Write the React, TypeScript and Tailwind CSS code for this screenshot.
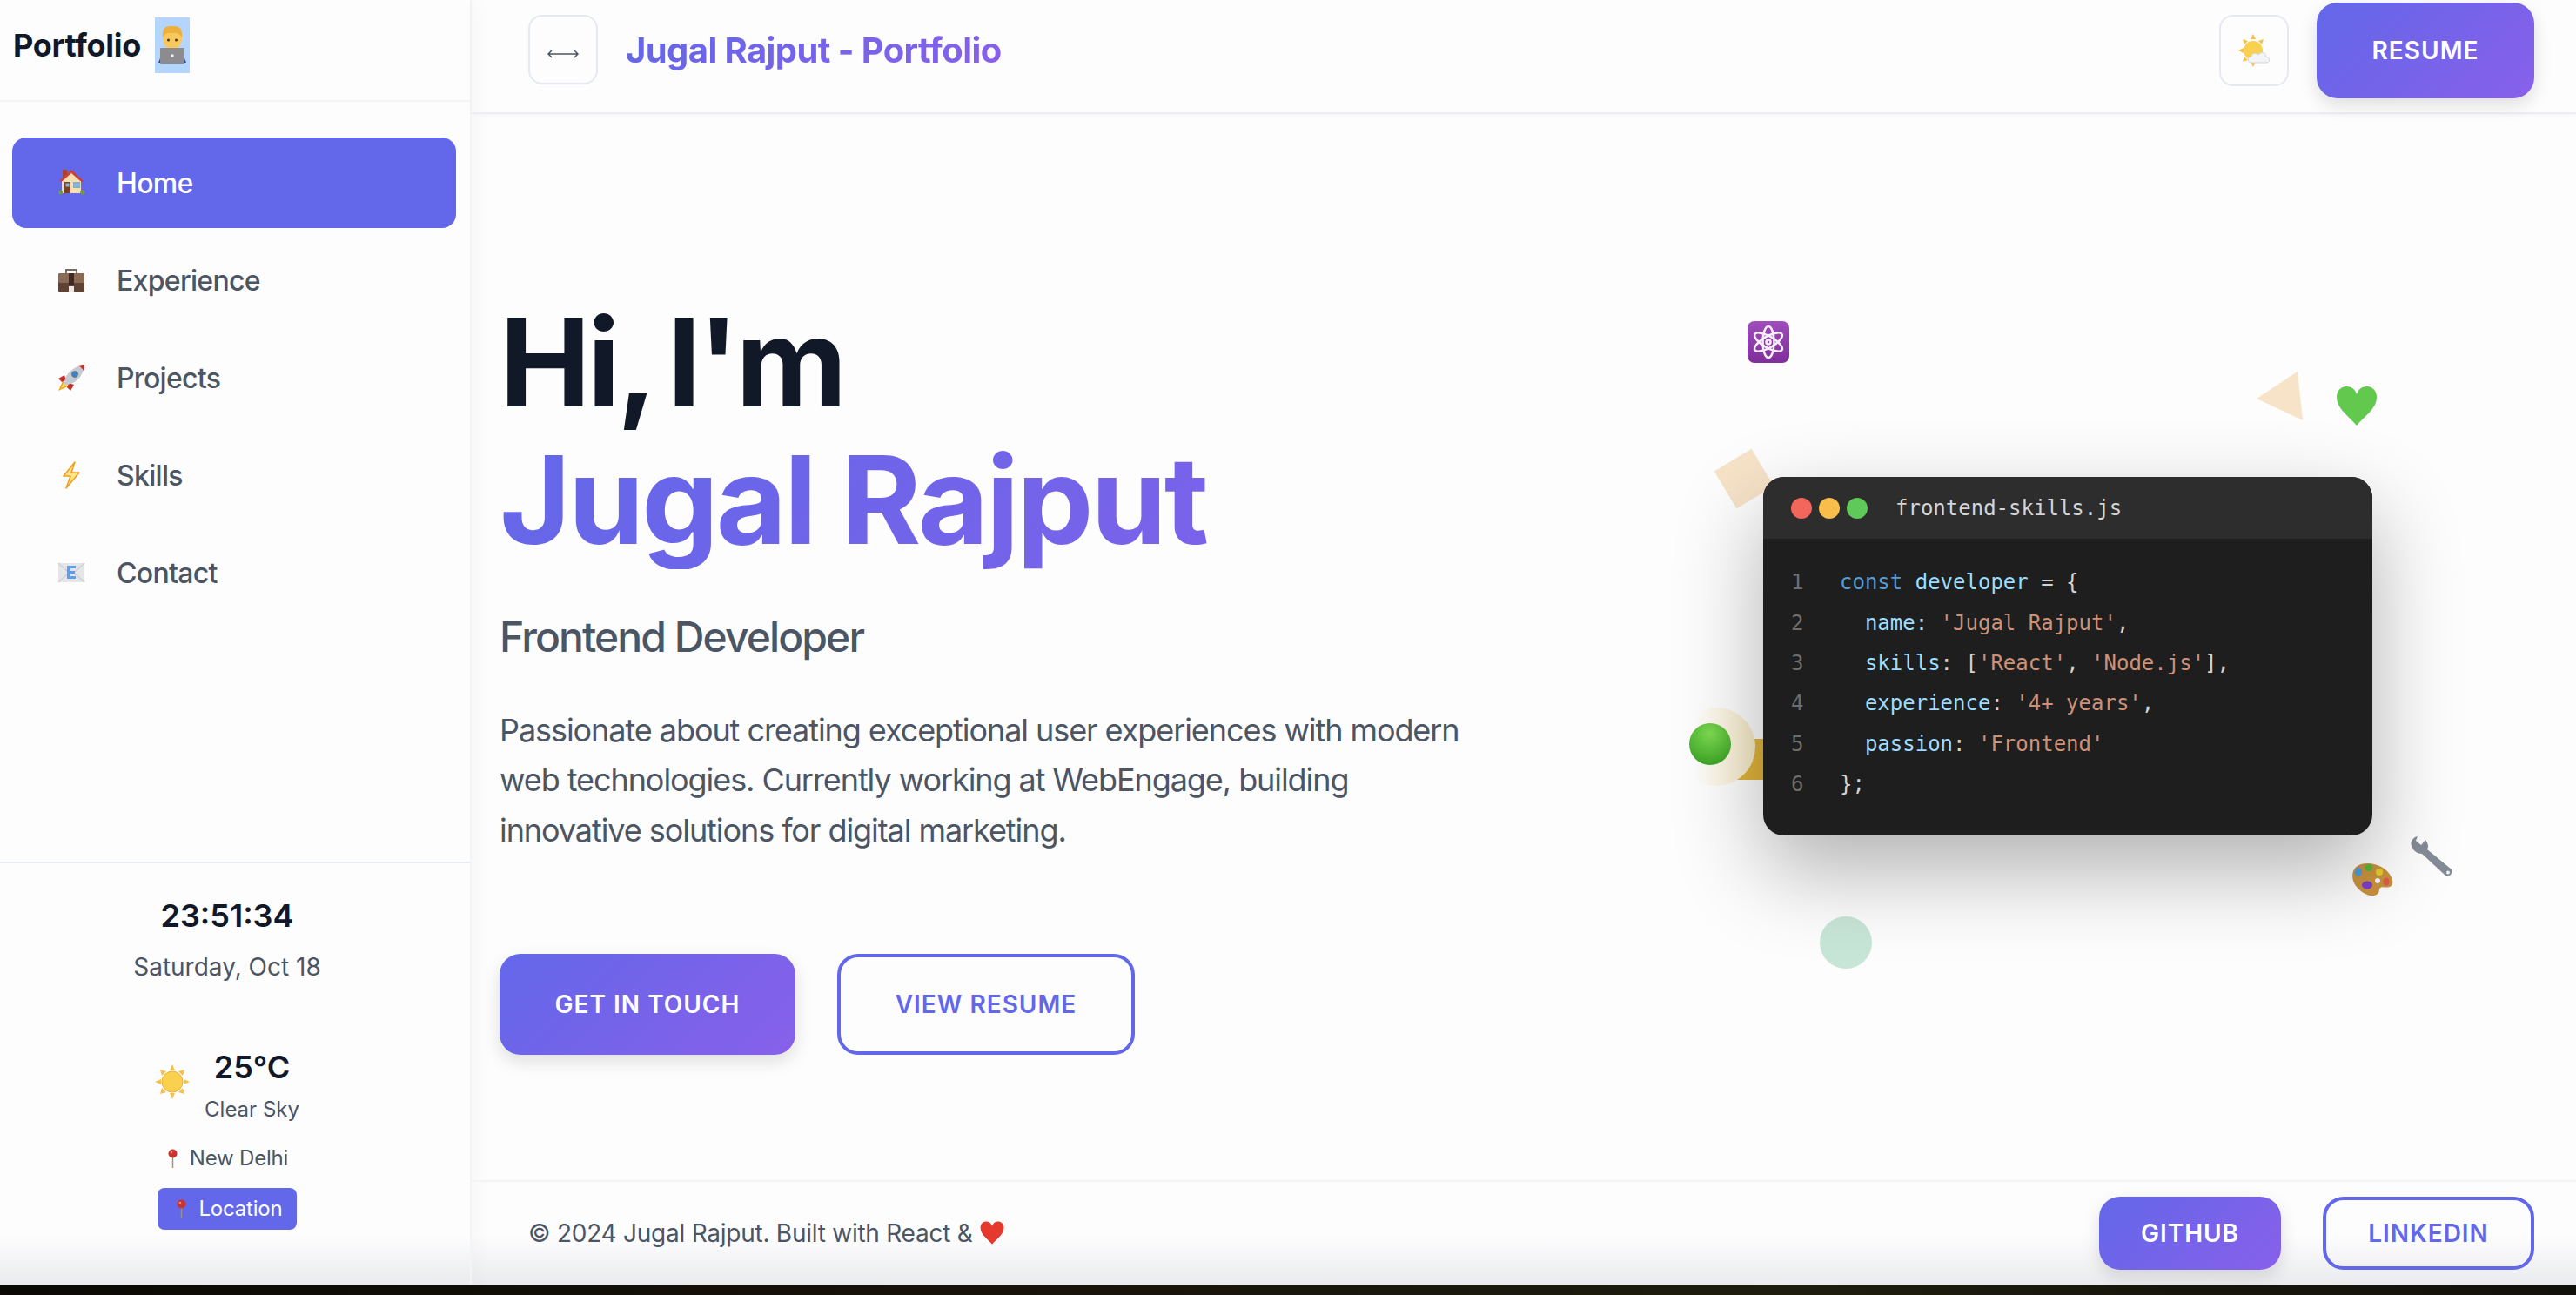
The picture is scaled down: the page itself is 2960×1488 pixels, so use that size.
import React from "react";

const LogoDev = () => (
  <svg width="40" height="64" viewBox="0 0 40 64">
    <rect width="40" height="64" fill="#b4d5fe" />
    <path d="M4 52 L8 42 H32 L36 52 Z" fill="#2f45a8" />
    <ellipse cx="20" cy="24" rx="11" ry="13" fill="#f7c85c" />
    <path d="M9 23 C8 10 14 10 20 10 C27 10 32 11 31 23 C28 18 25 17 20 18 C15 17 12 18 9 23 Z" fill="#eeb03c" />
    <circle cx="15.500" cy="26" r="1.500" fill="#4a3520" />
    <circle cx="24.500" cy="26" r="1.500" fill="#4a3520" />
    <rect x="6" y="35" width="28" height="18" rx="1" fill="#8c8c90" />
    <rect x="18.500" y="42.500" width="3" height="3" fill="#f2f2f2" />
  </svg>
);

const House = () => (
  <svg width="32" height="32" viewBox="0 0 32 32">
    <rect x="6" y="1" width="5" height="9" fill="#a5452f" />
    <path d="M5 13 L16 3 L27 13 V28 H5 Z" fill="#f5dfb0" />
    <path d="M2 14 L16 1 L30 14 L27.500 15 L16 5 L4.500 15 Z" fill="#c9413a" />
    <rect x="8" y="15" width="7" height="13" fill="#7d3f22" />
    <rect x="9.500" y="16.500" width="4" height="4" fill="#7cb5e8" />
    <rect x="18" y="15" width="8" height="7" fill="#93a8b5" />
    <rect x="19" y="16" width="6" height="5" fill="#7cb5e8" />
    <circle cx="3.500" cy="27" r="2.500" fill="#6f9d3a" />
    <circle cx="28.500" cy="27" r="2.500" fill="#6f9d3a" />
  </svg>
);

const Briefcase = () => (
  <svg width="32" height="32" viewBox="0 0 32 32">
    <path d="M10 9 V4 H22 V9" fill="none" stroke="#7a6a5e" strokeWidth="2" />
    <rect x="1" y="8" width="30" height="22" rx="2" fill="#5e4334" />
    <rect x="1" y="8" width="30" height="11" rx="2" fill="#8a6a55" />
    <rect x="13" y="8" width="6" height="14" fill="#3e2a20" />
    <rect x="13" y="23" width="6" height="6" fill="#e8e8e8" />
  </svg>
);

const Rocket = () => (
  <svg width="32" height="32" viewBox="0 0 32 32">
    <path d="M6 20 L1 31 L12 26 Z" fill="#f7a41d" />
    <path d="M7 22 L4 28 L10 25 Z" fill="#fde047" />
    <path d="M8 13 L1 17 L5 21 L10 19 Z" fill="#c5312b" />
    <path d="M19 24 L15 31 L11 27 L13 22 Z" fill="#c5312b" />
    <path d="M8 24 C7 14 17 3 31 1 C30 15 19 25 8 24 Z" fill="#c4cad2" />
    <path d="M24 2 C26 3 29 6 30 8 C31 5 31 3 31 1 C29 1 26 1 24 2 Z" fill="#c5312b" />
    <circle cx="20" cy="12" r="3.500" fill="#3b82c4" stroke="#6f7883" strokeWidth="1" />
  </svg>
);

const Bolt = () => (
  <svg width="32" height="32" viewBox="0 0 32 32">
    <path d="M20 1 L7 17 H15 L10 31 L25 13 H16 Z" fill="#fde68a" stroke="#f29c1f" strokeWidth="1.500" strokeLinejoin="round" />
  </svg>
);

const Envelope = () => (
  <svg width="32" height="32" viewBox="0 0 32 32">
    <rect x="1" y="5" width="30" height="22" fill="#e4e6e8" />
    <path d="M1 5 L13 16 M31 5 L19 16 M1 27 L12 17 M31 27 L20 17" stroke="#cdd0d4" strokeWidth="1.500" />
    <path d="M11 8 H21 V11 H15 V14 H20 V17 H15 V20 H21 V23 H11 Z" fill="#5f9cee" />
  </svg>
);

const Sun = ({ size = 40 }: { size?: number }) => (
  <svg width={size} height={size} viewBox="0 0 40 40">
    <g fill="#f6c04c">
      <path d="M20 0 L23 7 H17 Z" />
      <path d="M20 40 L23 33 H17 Z" />
      <path d="M0 20 L7 17 V23 Z" />
      <path d="M40 20 L33 17 V23 Z" />
      <path d="M6 6 L13 8 L8 13 Z" />
      <path d="M34 6 L27 8 L32 13 Z" />
      <path d="M6 34 L13 32 L8 27 Z" />
      <path d="M34 34 L27 32 L32 27 Z" />
    </g>
    <circle cx="20" cy="20" r="12" fill="#fad14e" stroke="#f0ad3c" strokeWidth="1" />
  </svg>
);

const SunCloud = () => (
  <svg width="36" height="38" viewBox="0 0 36 38">
    <g fill="#f6c04c">
      <path d="M17 0 L20 6 H14 Z" />
      <path d="M17 38 L20 32 H14 Z" />
      <path d="M0 19 L6 16 V22 Z" />
      <path d="M5 6 L11 8 L7 12 Z" />
      <path d="M29 6 L23 8 L27 12 Z" />
      <path d="M5 32 L11 30 L7 26 Z" />
    </g>
    <circle cx="17" cy="19" r="11" fill="#fad14e" />
    <path d="M15 33 C10 33 10 26 15 26 C15 22 20 21 23 24 C26 19 33 22 31 26 C37 26 37 33 32 33 Z" fill="#f2f4f6" stroke="#cfd5dc" strokeWidth="1" />
  </svg>
);

const Pin = () => (
  <svg width="15" height="22" viewBox="0 0 15 22">
    <rect x="6.800" y="8" width="1.400" height="14" fill="#9a8f88" />
    <circle cx="7.500" cy="5.500" r="5" fill="#c8342e" />
    <circle cx="6" cy="4" r="1.300" fill="#ee8a80" />
  </svg>
);

const Heart = ({ fill, size }: { fill: string; size: number }) => (
  <svg width={size} height={size} viewBox="0 0 48 48">
    <path d="M24 46 C16 36 1 27 1 13 C1 5 7 1 12 1 C18 1 22 4 24 10 C26 4 30 1 36 1 C41 1 47 5 47 13 C47 27 32 36 24 46 Z" fill={fill} />
  </svg>
);

const Atom = () => (
  <svg width="48" height="48" viewBox="0 0 48 48">
    <defs>
      <linearGradient id="atomBg" x1="0" y1="0" x2="0" y2="1">
        <stop offset="0" stopColor="#a04cbc" />
        <stop offset="1" stopColor="#7e2f9c" />
      </linearGradient>
    </defs>
    <rect width="48" height="48" rx="8" fill="url(#atomBg)" />
    <g fill="none" stroke="#f7eef9" strokeWidth="2.500">
      <ellipse cx="24" cy="24" rx="6.500" ry="18" />
      <ellipse cx="24" cy="24" rx="6.500" ry="18" transform="rotate(60 24 24)" />
      <ellipse cx="24" cy="24" rx="6.500" ry="18" transform="rotate(-60 24 24)" />
      <circle cx="24" cy="24" r="2.500" />
    </g>
  </svg>
);

const Wrench = () => (
  <svg width="48" height="48" viewBox="0 0 48 48">
    <path d="M8 3 L6 8 L12 13 L17 7 C20 11 21 15 19 18 L47 41 C49 47 43 50 40 48 L13 23 C8 23 3 20 1 14 C-1 9 3 4 8 3 Z" fill="#858c97" />
    <circle cx="43" cy="44.500" r="2" fill="#eef0f2" />
  </svg>
);

const Palette = () => (
  <svg width="48" height="40" viewBox="0 0 48 40">
    <path d="M2 10 C6 0 22 -2 36 6 C48 14 50 26 44 28 C38 30 34 26 32 31 C32 37 26 40 18 37 C8 33 -2 22 2 10 Z" fill="#c9933f" />
    <ellipse cx="8" cy="11" rx="4" ry="5" fill="#4a9ee0" />
    <ellipse cx="20" cy="6" rx="4.500" ry="4" fill="#55b83a" />
    <ellipse cx="32" cy="11" rx="4" ry="4" fill="#eacb2f" />
    <ellipse cx="18" cy="26" rx="6" ry="4.500" fill="#7d3fc8" />
    <ellipse cx="40" cy="22" rx="3.500" ry="4.500" fill="#e25a4a" />
    <circle cx="30" cy="21" r="3" fill="#f6f6f6" />
  </svg>
);

const navItems = [
  { label: "Home", icon: <House />, active: true },
  { label: "Experience", icon: <Briefcase /> },
  { label: "Projects", icon: <Rocket /> },
  { label: "Skills", icon: <Bolt /> },
  { label: "Contact", icon: <Envelope /> },
];

const K = ({ children }: { children: React.ReactNode }) => <span className="text-[#9cdcfe]">{children}</span>;
const S = ({ children }: { children: React.ReactNode }) => <span className="text-[#ce9178]">{children}</span>;

const codeLines: React.ReactNode[] = [
  <>
    <span className="text-[#569cd6]">const</span> <K>developer</K> = {"{"}
  </>,
  <>
    {"  "}
    <K>name</K>: <S>'Jugal Rajput'</S>,
  </>,
  <>
    {"  "}
    <K>skills</K>: [<S>'React'</S>, <S>'Node.js'</S>],
  </>,
  <>
    {"  "}
    <K>experience</K>: <S>'4+ years'</S>,
  </>,
  <>
    {"  "}
    <K>passion</K>: <S>'Frontend'</S>
  </>,
  <>{"};"}</>,
];

const primaryBtn =
  "flex items-center justify-center rounded-[24px] bg-[linear-gradient(135deg,#6367e9,#8860ea)] text-white font-semibold tracking-[1px] shadow-[0_8px_20px_rgba(0,0,0,0.12)]";
const outlineBtn =
  "flex items-center justify-center rounded-[24px] border-4 border-[#6367e9] text-[#6367e9] font-semibold tracking-[1px]";
const gradientText =
  "bg-[linear-gradient(135deg,#6367e9,#8860ea)] bg-clip-text text-transparent";

const Sidebar = () => (
  <aside className="z-10 flex w-[542px] shrink-0 flex-col border-r-2 border-[#f3f4f6] shadow-[4px_0_24px_rgba(0,0,0,0.03)]">
    <div className="flex h-[117px] items-start gap-4 border-b-2 border-[#f3f4f6] pl-[15px] pt-5">
      <span className="mt-[10px] text-[36px] leading-[44px] font-bold tracking-[-0.3px] text-[#111827]">Portfolio</span>
      <LogoDev />
    </div>
    <nav className="flex flex-col gap-2 pl-[14px] pr-[16px] pt-[41px]">
      {navItems.map((item) => (
        <div
          key={item.label}
          className={
            item.active
              ? "flex h-[104px] items-center gap-[33px] rounded-[16px] bg-[#6367e9] pl-[49px] text-white"
              : "flex h-[104px] items-center gap-[33px] rounded-[16px] pl-[49px] text-[#4b5563]"
          }
        >
          <span className="flex w-[38px] justify-center">{item.icon}</span>
          <span className="mt-[2px] text-[32px] leading-[40px] font-medium tracking-[-0.7px]">{item.label}</span>
        </div>
      ))}
    </nav>
    <div className="mt-auto flex h-[486px] flex-col items-center border-t-2 border-[#e9edf2] pr-[18px]">
      <div className="mt-[38px] text-[36px] leading-[44px] font-semibold text-[#111827]">23:51:34</div>
      <div className="mt-[20px] text-[28px] leading-[34px] text-[#4b5563]">Saturday, Oct 18</div>
      <div className="mt-[76px] flex items-center gap-[17px]">
        <span className="mt-[-8px]">
          <Sun />
        </span>
        <div className="flex flex-col items-center">
          <span className="text-[36px] leading-[44px] font-semibold text-[#111827]">25°C</span>
          <span className="mt-[12px] text-[24px] leading-[30px] text-[#4b5563]">Clear Sky</span>
        </div>
      </div>
      <div className="mt-[26px] flex items-center gap-[12px] text-[24px] leading-[30px] tracking-[-0.2px] text-[#4b5563]">
        <Pin />
        New Delhi
      </div>
      <div className="mt-[19px] flex h-[48px] w-[160px] items-center justify-center gap-[12px] rounded-[8px] bg-[#6367e9] pl-1 text-[24px] tracking-[-0.2px] text-white">
        <Pin />
        Location
      </div>
    </div>
  </aside>
);

const TopBar = () => (
  <header className="flex h-[131px] shrink-0 items-start border-b-2 border-[#eceef2] pl-[65px] pr-[48px] shadow-[0_2px_6px_rgba(0,0,0,0.03)]">
    <button className="mt-[17px] flex h-[80px] w-[80px] items-center justify-center rounded-[16px] border-2 border-[#e5e9f0] text-[#4b5563]">
      <svg className="mt-[10px]" width="36" height="12" viewBox="0 0 36 12" fill="none" stroke="#4b5563" strokeWidth="1.500">
        <path d="M1 6 H35 M5 2 L1 6 L5 10 M31 2 L35 6 L31 10" />
      </svg>
    </button>
    <span className={`ml-[32px] mt-[33px] text-[40px] leading-[50px] font-bold tracking-[-0.6px] ${gradientText}`}>Jugal Rajput - Portfolio</span>
    <button className="ml-auto mt-[17px] flex h-[82px] w-[80px] items-center justify-center rounded-[16px] border-2 border-[#e5e9f0]">
      <SunCloud />
    </button>
    <div className={`ml-[32px] mt-[3px] h-[110px] w-[250px] text-[28px] ${primaryBtn}`}>RESUME</div>
  </header>
);

const CodeCard = () => (
  <div className="relative h-[412px] w-[700px]">
    <div className="absolute left-[-47px] top-[-23px] h-[50px] w-[50px] rotate-[-31deg] bg-[#f7e3c8]" />
    <div className="absolute left-[-37px] top-[301px] h-[47px] w-[60px] bg-[#e0b53c]" />
    <div className="absolute left-[-99px] top-[265px] h-[90px] w-[90px] rounded-full bg-[linear-gradient(to_right,rgba(255,255,255,0)_20%,#fbf3dc_70%,#f8ebc6)]" />
    <div className="absolute left-[-85px] top-[283px] h-[48px] w-[48px] rounded-full bg-[radial-gradient(circle_at_50%_25%,#7fdc52,#2f9a1d)]" />
    <div className="absolute left-[-18px] top-[-179px]">
      <Atom />
    </div>
    <svg className="absolute left-[567px] top-[-121px]" width="53" height="56" viewBox="0 0 53 56">
      <path d="M47 0 L0 31 L53 56 Z" fill="#f7e3c8" />
    </svg>
    <div className="absolute left-[658px] top-[-105px]">
      <Heart fill="#62c84e" size={48} />
    </div>
    <div className="absolute left-[65px] top-[505px] h-[60px] w-[60px] rounded-full bg-[#c8e6d8]" />
    <div className="absolute left-[744px] top-[410px]">
      <Wrench />
    </div>
    <div className="absolute left-[676px] top-[443px]">
      <Palette />
    </div>
    <div className="relative h-full overflow-hidden rounded-[24px] bg-[#1e1e1e] font-['DejaVu_Sans_Mono',monospace] text-[24px] shadow-[0_40px_100px_rgba(0,0,0,0.3)]">
      <div className="flex h-[71px] items-center gap-2 bg-[#2d2d2d] pl-[32px]">
        <span className="h-[24px] w-[24px] rounded-full bg-[#f2665c]" />
        <span className="h-[24px] w-[24px] rounded-full bg-[#f8bd4b]" />
        <span className="h-[24px] w-[24px] rounded-full bg-[#5fc95a]" />
        <span className="ml-[24px] text-[#d4d4d4]">frontend-skills.js</span>
      </div>
      <div className="pl-[32px] pt-[27px]">
        {codeLines.map((line, i) => (
          <div key={i} className="flex h-[46.4px] items-center">
            <span className="w-[56px] text-[#6e6e6e]">{i + 1}</span>
            <span className="whitespace-pre text-[#d4d4d4]">{line}</span>
          </div>
        ))}
      </div>
    </div>
  </div>
);

const Hero = () => (
  <section className="flex flex-1">
    <div className="w-[1399px] shrink-0 pl-[32px] pt-[206px]">
      <h1 className="text-[140px] leading-[158.400px] font-bold tracking-[-2.900px]">
        <span className="block tracking-[-3.900px] text-[#111827] [word-spacing:-10px]">Hi, I'm</span>
        <span className={`block ${gradientText}`}>Jugal Rajput</span>
      </h1>
      <h2 className="mt-[49px] text-[48px] leading-[58px] font-medium tracking-[-1.900px] text-[#4b5563]">Frontend Developer</h2>
      <p className="mt-[50px] w-[1120px] text-[36px] leading-[57.600px] tracking-[-1.070px] text-[#4b5563]">
        Passionate about creating exceptional user experiences with modern web technologies. Currently working at WebEngage, building innovative solutions for digital marketing.
      </p>
      <div className="mt-[112px] flex gap-[48px]">
        <div className={`h-[116px] w-[340px] text-[28px] ${primaryBtn}`}>GET IN TOUCH</div>
        <div className={`h-[116px] w-[342px] text-[28px] ${outlineBtn}`}>VIEW RESUME</div>
      </div>
    </div>
    <div className="flex-1 pl-[85px] pt-[417px]">
      <CodeCard />
    </div>
  </section>
);

const Footer = () => (
  <footer className="flex h-[120px] shrink-0 items-center border-t-2 border-[#f3f4f6] pl-[65px] pr-[48px]">
    <span className="flex items-center gap-[8px] text-[28px] tracking-[-0.25px] text-[#4b5563]">
      © 2024 Jugal Rajput. Built with React &amp;
      <Heart fill="#e5392d" size={28} />
    </span>
    <div className={`ml-auto h-[84px] w-[209px] text-[28px] ${primaryBtn}`}>GITHUB</div>
    <div className={`ml-[48px] h-[84px] w-[243px] text-[28px] ${outlineBtn}`}>LINKEDIN</div>
  </footer>
);

export default function App() {
  return (
    <div className="flex h-[1488px] w-[2960px] flex-col overflow-hidden bg-[#0c0a06] font-['Inter',sans-serif]">
      <div className="relative flex h-[1476px] shrink-0 bg-[#fdfdfe]">
        <div className="pointer-events-none absolute inset-x-0 bottom-0 h-[56px] bg-[linear-gradient(to_bottom,rgba(232,233,236,0),rgba(232,233,236,0.9))]" />
        <Sidebar />
        <main className="relative z-10 flex min-w-0 flex-1 flex-col">
          <TopBar />
          <Hero />
          <Footer />
        </main>
      </div>
      <div className="h-3 bg-[linear-gradient(to_right,#0c0a06,#17130a_40%,#1d1c0e_70%,#12100a)]" />
    </div>
  );
}
